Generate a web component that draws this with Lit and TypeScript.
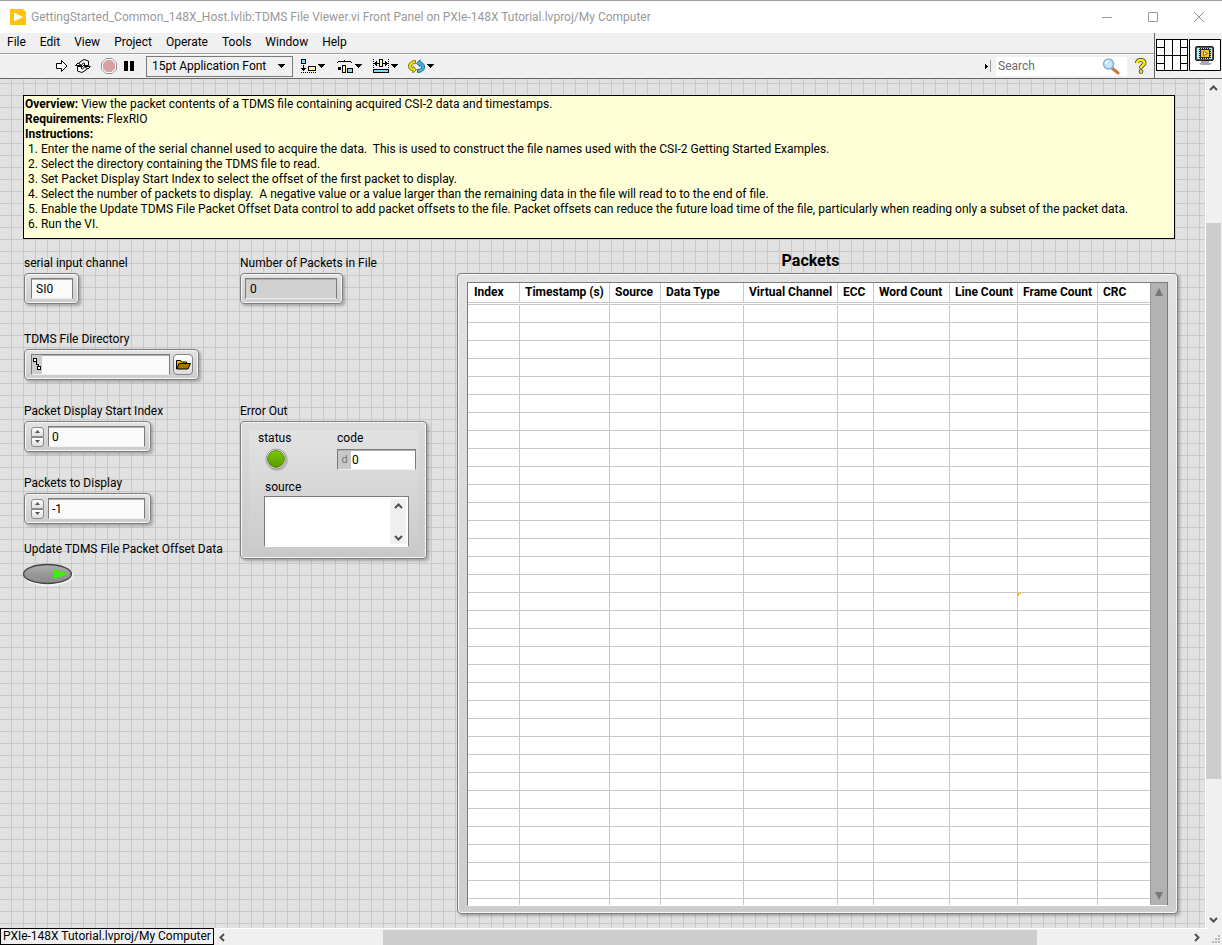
import { LitElement, html, css, svg } from "lit";
import { customElement } from "lit/decorators.js";

const menus = ["File", "Edit", "View", "Project", "Operate", "Tools", "Window", "Help"];

const steps = [
  "1. Enter the name of the serial channel used to acquire the data.  This is used to construct the file names used with the CSI-2 Getting Started Examples.",
  "2. Select the directory containing the TDMS file to read.",
  "3. Set Packet Display Start Index to select the offset of the first packet to display.",
  "4. Select the number of packets to display.  A negative value or a value larger than the remaining data in the file will read to to the end of file.",
  "5. Enable the Update TDMS File Packet Offset Data control to add packet offsets to the file. Packet offsets can reduce the future load time of the file, particularly when reading only a subset of the packet data.",
  "6. Run the VI.",
];

const columns = ["Index", "Timestamp (s)", "Source", "Data Type", "Virtual Channel", "ECC", "Word Count", "Line Count", "Frame Count", "CRC"];

const rowCount = 34;
const flagged = { row: 16, col: 8 };

const caret = html`<svg class="caret" width="7" height="4" viewBox="0 0 7 4" shape-rendering="crispEdges"><path d="M0 0h7v1H6v1H5v1H4v1H3V3H2V2H1V1H0z"/></svg>`;

const chevron = (d: string, w: number, h: number) =>
  html`<svg width=${w} height=${h} viewBox="0 0 ${w} ${h}" fill="none" stroke="#505050" stroke-width="2">${svg`<path d=${d}/>`}</svg>`;
const up = () => chevron("M1 5 4.500 1.500 8 5", 9, 6);
const down = () => chevron("M1 1 4.500 4.500 8 1", 9, 6);
const left = () => chevron("M5 1 1.500 4.500 5 8", 6, 9);
const right = () => chevron("M1 1 4.500 4.500 1 8", 6, 9);

@customElement("app-root")
export class AppRoot extends LitElement {
  static styles = css`
    :host {
      display: flex;
      flex-direction: column;
      min-height: 100vh;
      box-sizing: border-box;
      border-top: 1px solid #a0a0a0;
      background: #f0f0f0;
      color: #000;
      font: 12px/16px Roboto, "Open Sans", sans-serif;
    }
    *, *::before, *::after { box-sizing: border-box; }
    button, input, textarea, select { font: inherit; color: inherit; margin: 0; padding: 0; border: 0; border-radius: 0; outline: 0; background: none; appearance: none; }
    button { display: flex; align-items: center; justify-content: center; }
    svg { display: block; flex: none; }

    .titlebar { display: flex; align-items: center; height: 32px; background: #fff; padding-left: 10px; color: #999; }
    .titlebar h1 { flex: 1; margin: 0 0 0 5px; font: inherit; white-space: nowrap; }
    .titlebar button { width: 46px; height: 32px; }

    .head { display: flex; height: 46px; border-bottom: 1px solid #646464; }
    .bars { flex: 1; display: flex; flex-direction: column; min-width: 0; }
    .menubar { display: flex; height: 21px; align-items: center; border-bottom: 1px solid #a0a0a0; padding: 0 0 2px 7px; gap: 14px; }
    .menubar a { color: #000; text-decoration: none; }
    .toolbar { display: flex; flex: 1; align-items: center; border-top: 1px solid #fff; padding: 0 0 1px 55px; }
    .run { width: 14px; }
    .again { width: 16px; margin-left: 6px; }
    .abort { width: 16px; margin-left: 10px; }
    .pause { width: 10px; margin-left: 7px; }
    .fontpick { display: grid; align-items: center; width: 147px; height: 21px; margin: 0 8px 0 12px; border: 1px solid #7a7a7a; }
    .fontpick select, .fontpick .caret { grid-area: 1 / 1; }
    .fontpick select { padding-left: 5px; height: 19px; width: 145px; }
    .fontpick .caret { justify-self: end; margin-right: 7px; }
    .tool { gap: 2px; width: 24px; margin-right: 12px; }
    .spring { flex: 1; }
    .search { display: flex; align-items: center; margin-left: 4px; width: 131px; height: 19px; background: #fff; }
    .search input { flex: 1; width: 90px; padding-left: 2px; }
    .search input::placeholder { color: #6d6d6d; opacity: 1; }
    .search button { margin-right: 7px; }
    .help { margin: 0 7px 0 8px; }
    .corner { display: flex; align-items: flex-start; gap: 1px; padding: 6px 1px 0 1px; border-left: 1px solid #646464; }

    .main { flex: 1; display: grid; grid-template-columns: 1fr 17px; grid-template-rows: 1fr 17px; }
    .canvas {
      padding: 16px 27px 14px 23px;
      background:
        linear-gradient(90deg, transparent 11px, #c8c8c8 11px) 0 0 / 12px 12px,
        linear-gradient(180deg, transparent 11px, #c8c8c8 11px) 0 5px / 12px 12px,
        #e1e1e1;
    }
    .notes { margin-right: 3px; min-height: 144px; padding: 1px; border: 1px solid #000; background: #ffffd7; line-height: 15px; white-space: pre-wrap; }
    .notes p, .notes ol { margin: 0; padding: 0; list-style: none; }
    .notes ol { padding-left: 3px; }
    .work { display: grid; grid-template-columns: 216px 217px 1fr; grid-template-rows: 76px 72px 72px 66px 1fr; padding: 16px 0 0 1px; }
    .group { display: flex; flex-direction: column; align-items: flex-start; gap: 2px; }
    .group > label, .group > .caption { white-space: nowrap; }
    .first { grid-area: 1 / 1; } .second { grid-area: 2 / 1; } .third { grid-area: 3 / 1; } .fourth { grid-area: 4 / 1; } .fifth { grid-area: 5 / 1; }
    .count { grid-area: 1 / 2; }
    .error { grid-area: 3 / 2 / 6 / 3; }
    .frame {
      display: flex; align-items: center; height: 31px; padding: 0 5px 0 6px;
      border: 1px solid #7d7d7d; border-radius: 4px;
      background: linear-gradient(#e2e2e2, #cdcdcd);
      box-shadow: inset 0 0 0 1px #f6f6f6, 2px 2px 3px #0004;
    }
    .field { height: 21px; padding: 0 4px; border: 1px solid #7b7b7b; border-bottom-color: #eee; background: #fafafa; box-shadow: inset 0 1px #b0b0b0; }
    .frame .short { width: 42px; }
    .frame .wide { width: 92px; background: #d0d0d0; margin-left: -2px; }
    .path { display: flex; align-items: center; width: 139px; padding: 0; }
    .path .grip { display: flex; align-items: center; justify-content: center; align-self: stretch; width: 10px; background: #ccc; }
    .path input { flex: 1; min-width: 0; height: 19px; padding: 0 3px; }
    .browse { width: 20px; height: 21px; margin-left: 3px; border: 1px solid #858585; border-radius: 4px; background: linear-gradient(#fff, #dcdcdc); }
    .spin { display: flex; flex-direction: column; width: 13px; margin-right: 4px; }
    .spin button { height: 10px; border: 1px solid #8b8b8b; border-radius: 3px 3px 0 0; background: linear-gradient(#fff, #dedede); }
    .spin button + button { border-radius: 0 0 3px 3px; }
    .frame .number { width: 97px; padding-left: 3px; }
    .toggle { margin: 4px 0 0 -1px; }

    .cluster {
      display: grid; grid-template-columns: 79px 1fr; align-content: start; width: 187px; height: 138px; padding: 8px 10px 10px 17px;
      background: linear-gradient(#e2e2e2, #cbcbcb) 8px 8px / 169px 120px no-repeat, linear-gradient(#dcdcdc, #c8c8c8);
    }
    .cluster .led { margin: 2px 0 0 7px; }
    .code { display: flex; align-items: center; height: 21px; width: 79px; padding: 0; background: #fff; margin-top: 1px; }
    .code i { font-style: normal; font-size: 11px; color: #777; background: #c8c8c8; width: 13px; text-align: center; height: 18px; line-height: 18px; }
    .code input { width: 60px; padding-left: 1px; }
    .source { display: flex; flex-direction: column; grid-column: 1 / 3; padding: 7px 0 0 7px; }
    .log { display: flex; width: 145px; height: 51px; margin: 1px 0 0 -1px; border: 1px solid #7b7b7b; border-bottom-color: #fff; background: #fff; }
    .log textarea { flex: 1; min-width: 0; resize: none; overflow: hidden; }
    .log .rail { display: flex; flex-direction: column; justify-content: space-between; align-items: center; width: 16px; margin: 2px; padding: 4px 0 3px; background: #f0f0f0; }

    .packets { grid-area: 1 / 3 / 6 / 4; }
    .packets h2 { margin: -5px 14px 0 0; font-size: 16px; line-height: 22px; text-align: center; font-weight: 700; }
    .sheet { margin-top: 1px; height: 641px; padding: 8px 9px 7px 9px; }
    .well { display: flex; flex: 1; min-width: 0; align-self: stretch; overflow: hidden; border: 1px solid #7b7b7b; border-bottom-color: #fff; background: #fff; }
    table { flex: 1; width: 100%; table-layout: fixed; border-collapse: separate; border-spacing: 0; }
    th { height: 20px; padding: 0 0 2px 5px; border-right: 1px solid #c8c8c8; border-bottom: 1px solid #c8c8c8; text-align: left; white-space: nowrap; font-weight: 700; line-height: 16px; }
    th:first-child { padding-left: 6px; }
    td { height: 18px; padding: 0; border-right: 1px solid #c8c8c8; border-bottom: 1px solid #c8c8c8; }
    th:last-child, td:last-child { border-right: 0; }
    .gap td { height: 2px; border-right-color: #fff; }
    tr.cut td { height: 7px; border-bottom: 0; }
    td.flag { background: linear-gradient(#ffb900, #ffb900) 0 0 / 3px 1px no-repeat, linear-gradient(#ffb900, #ffb900) 0 0 / 1px 3px no-repeat; }
    .c0 { width: 52px; } .c1 { width: 90px; } .c2 { width: 51px; } .c3 { width: 83px; } .c4 { width: 94px; }
    .c5 { width: 36px; } .c6 { width: 76px; } .c7 { width: 68px; } .c8 { width: 80px; }
    .vbar { display: flex; flex-direction: column; justify-content: space-between; align-items: center; width: 17px; padding: 5px 0 5px; border-left: 1px solid #999; background: #b2b2b2; }

    .right { display: flex; flex-direction: column; align-items: center; border-left: 1px solid #fff; padding: 6px 1px 5px 0; background: #f0f0f0; }
    .right .lead { flex: 132; } .right .thumb { flex: 553; width: 15px; background: #cdcdcd; } .right .tail { flex: 138; }
    .foot { grid-column: 1 / 3; display: flex; align-items: center; background: #f0f0f0; }
    .target { height: 17px; padding: 0 2px; border: 1px solid #000; line-height: 15px; white-space: nowrap; background: #f0f0f0; }
    .rail-x { flex: 1; display: flex; align-items: center; align-self: stretch; border-top: 1px solid #fff; padding: 0 8px 0 5px; }
    .rail-x .lead { flex: 158; } .rail-x .thumb { flex: 652; height: 15px; background: #cdcdcd; } .rail-x .tail { flex: 157; }
    .grip-corner { align-self: flex-end; margin: 0 2px 2px 4px; }
  `;

  private numberField(id: string, value: string) {
    return html`<div class="frame">
      <div class="spin">
        <button aria-label="Increment"><svg width="5" height="3" viewBox="0 0 5 3"><path d="M2.500 0 5 3H0z" fill="#555"/></svg></button>
        <button aria-label="Decrement"><svg width="5" height="3" viewBox="0 0 5 3"><path d="M2.500 3 5 0H0z" fill="#555"/></svg></button>
      </div>
      <input class="field number" id=${id} .value=${value}>
    </div>`;
  }

  render() {
    return html`
      <header class="titlebar">
        <svg width="16" height="16" viewBox="0 0 16 16"><path d="M0 0h13l3 3v13H0z" fill="#ffc20e"/><path d="M4 3.500 13 8l-9 4.500z" fill="#fff"/></svg>
        <h1>GettingStarted_Common_148X_Host.lvlib:TDMS File Viewer.vi Front Panel on PXIe-148X Tutorial.lvproj/My Computer</h1>
        <button aria-label="Minimize"><svg width="10" height="10" viewBox="0 0 10 10"><path d="M0 5.500h10" stroke="#999"/></svg></button>
        <button aria-label="Maximize"><svg width="10" height="10" viewBox="0 0 10 10"><path d="M.5.5h9v9h-9z" fill="none" stroke="#999"/></svg></button>
        <button aria-label="Close"><svg width="10" height="10" viewBox="0 0 10 10"><path d="m0 0 10 10M10 0 0 10" stroke="#999"/></svg></button>
      </header>

      <div class="head">
        <div class="bars">
          <nav class="menubar">${menus.map((m) => html`<a href="#">${m}</a>`)}</nav>
          <div class="toolbar">
            <button class="run" aria-label="Run"><svg width="12" height="14" viewBox="0 0 12 14"><path d="M.5 4.500h5v-3L11 7l-5.500 5.500v-3h-5z" fill="#fff" stroke="#000"/></svg></button>
            <button class="again" aria-label="Run Continuously"><svg width="16" height="14" viewBox="0 0 16 14" fill="#fff" stroke="#000"><path d="M3.500 5.500 5 3l4-2.500L13.500 2v4.500H8.500L10 5 8.500 3.800 6 6.500z"/><path d="M12.500 8.500 11 11l-4 2.500L2.500 12V7.500h5L6 9l1.500 1.200L10 7.500z"/><path d="M.5 6.500 3 4l3.500 2.500zM15.500 7.500 13 10 9.500 7.500z"/></svg></button>
            <button class="abort" aria-label="Abort Execution"><svg width="16" height="16" viewBox="0 0 16 16"><path d="M5 .5h6L15.500 5v6L11 15.500H5L.5 11V5z" fill="#fff" stroke="#909090"/><path d="M5.500 2h5L14 5.500v5L10.500 14h-5L2 10.500v-5z" fill="#dba0a0"/></svg></button>
            <button class="pause" aria-label="Pause"><svg width="10" height="10" viewBox="0 0 10 10"><path d="M0 0h4v10H0zM6 0h4v10H6z"/></svg></button>
            <div class="fontpick">
              <select aria-label="Text Settings"><option>15pt Application Font</option></select>
              ${caret}
            </div>
            <button class="tool" aria-label="Align Objects"><svg width="15" height="14" viewBox="0 0 15 14" shape-rendering="crispEdges"><path d="M.5.5h4v4h-4z" fill="#6fe0f5" stroke="#000"/><path d="M2 6h1v4H2zM0 9h5v1H4v1H3v1H2v-1H1v-1H0zM0 13h1v1H0zM2 13h1v1H2zM4 13h1v1H4zM6 13h1v1H6zM8 13h1v1H8zM10 13h1v1h-1zM12 13h1v1h-1zM14 13h1v1h-1z"/><path d="M7.500 7.500h7v4h-7z" fill="#fff7a0" stroke="#000"/></svg>${caret}</button>
            <button class="tool" aria-label="Distribute Objects"><svg width="16" height="13" viewBox="0 0 16 13" shape-rendering="crispEdges"><path d="M0 2h1V1h6V0h1v1h6v1h1v1h-1V2H1v1H0zM1 7h3v3H1z"/><path d="M5.500 5.500h3v7h-3z" fill="#fff7a0" stroke="#000"/><path d="M10.500 8.500h5v4h-5z" fill="#6fe0f5" stroke="#000"/></svg>${caret}</button>
            <button class="tool" aria-label="Resize Objects"><svg width="16" height="14" viewBox="0 0 16 14" shape-rendering="crispEdges"><path d="M0 0h1v1H0zM0 2h1v1H0zM0 4h1v1H0zM0 6h1v1H0zM0 8h1v1H0zM15 0h1v1h-1zM15 2h1v1h-1zM15 4h1v1h-1zM15 6h1v1h-1zM15 8h1v1h-1zM1 4h1V3h1V2h1v2h2v1H4v2H3V6H2V5H1zM15 4h-1V3h-1V2h-1v2h-2v1h2v2h1V6h1V5h1z"/><path d="M6.500.5h3v7h-3z" fill="#fff7a0" stroke="#000"/><path d="M.5 10.500h15v3H.5z" fill="#6fe0f5" stroke="#000"/></svg>${caret}</button>
            <button class="tool" aria-label="Reorder"><svg width="17" height="15" viewBox="0 0 17 15"><path d="M7.500 1.500C3 1.500.5 4 .5 7s2 4.500 4.500 5v2L8.500 10.500 5 7.500v1.600C4 8.500 3.500 8 3.500 7c0-1.500 1.500-2.500 4-2.500z" fill="#e8dc18" stroke="#8a7f00"/><path d="M9.500 13.500c4.500 0 7-2.500 7-5.500s-2-4.500-4.500-5V.8L8.500 4.500l3.500 3V5.900c1 .6 1.500 1.100 1.500 2.100 0 1.500-1.500 2.500-4 2.500z" fill="#49b4dc" stroke="#1d6f92"/></svg>${caret}</button>
            <span class="spring"></span>
            <svg width="7" height="12" viewBox="0 0 7 12" shape-rendering="crispEdges"><path d="M0 4h1v1h1v1h1v1H2v1H1v1H0z"/><path d="M5 0h1v12H5z" fill="#999"/></svg>
            <div class="search">
              <input aria-label="Search" placeholder="Search">
              <button aria-label="Find"><svg width="18" height="17" viewBox="0 0 18 17"><path d="m10 10 6 5" stroke="#c77a45" stroke-width="3" stroke-linecap="round"/><circle cx="6.500" cy="6" r="5" fill="#c4e6fb" stroke="#86aedb" stroke-width="1.500"/><path d="M3.500 6a3 3 0 0 1 3-3" fill="none" stroke="#fff" stroke-width="1.500"/></svg></button>
            </div>
            <button class="help" aria-label="Context Help"><svg width="12" height="16" viewBox="0 0 12 16" fill="none"><path d="M2 5C2 1 9.500 1 9.500 5 9.500 7.500 6 7 6 10.500" stroke="#333" stroke-width="4"/><circle cx="6" cy="13.500" r="2.300" fill="#333"/><path d="M2 5C2 1 9.500 1 9.500 5 9.500 7.500 6 7 6 10" stroke="#ffee00" stroke-width="2.600"/><circle cx="6" cy="13.500" r="1.500" fill="#ffee00"/></svg></button>
          </div>
        </div>
        <div class="corner">
          <svg width="32" height="32" viewBox="0 0 32 32" fill="#fff" stroke="#000" shape-rendering="crispEdges"><path d="M.5.5h31v31H.5zM8.500 0v32M16.500 0v32M24.500 0v32M0 16.500h32M0 8.500h8M0 24.500h8M24 8.500h8M24 24.500h8"/></svg>
          <svg width="32" height="32" viewBox="0 0 32 32"><path d="M.5.5h31v31H.5z" fill="#fff" stroke="#000"/><path d="M12 22h8v2h3l-2 2H12l-2-2h2z" fill="#aaa"/><rect x="6.500" y="7.500" width="18" height="14" rx="1.500" fill="#555" stroke="#222"/><path d="M8 9h15v11H8z" fill="#9ff3f8"/><path d="M11 9.500h10M11 19.500h10" stroke="#111" stroke-dasharray="1 1"/><path d="M10.500 10v9M21.500 10v9" stroke="#111" stroke-dasharray="1 1"/><path d="M11.500 10.500h9v8h-9z" fill="#f8c414" stroke="#222"/><path d="m14.500 12.500 4 2-4 2z" fill="#fff" stroke="#6d5300" stroke-width=".8"/></svg>
        </div>
      </div>

      <div class="main">
        <main class="canvas">
          <section class="notes"><p><b>Overview:</b> View the packet contents of a TDMS file containing acquired CSI-2 data and timestamps.</p><p><b>Requirements:</b> FlexRIO</p><p><b>Instructions:</b></p><ol>${steps.map((s) => html`<li>${s}</li>`)}</ol></section>

          <div class="work">
            <div class="group first">
              <label for="channel">serial input channel</label>
              <div class="frame"><input class="field short" id="channel" .value=${"SI0"}></div>
            </div>
            <div class="group second">
              <label for="dir">TDMS File Directory</label>
              <div class="frame">
                <div class="field path">
                  <span class="grip"><svg width="8" height="13" viewBox="0 0 8 13" fill="#fff" stroke="#000" shape-rendering="crispEdges"><path d="M.5.500h3v3h-3zM4.500 8.500h3v3h-3zM3.500 4v2.500h1.500V8"/></svg></span>
                  <input id="dir">
                </div>
                <button class="browse" aria-label="Browse"><svg width="15" height="11" viewBox="0 0 15 11"><path d="M.5 10V1.500h4l1 1.500h5V5" fill="#ffb000" stroke="#000"/><path d="M3 4.500h11.500L12 10H.8z" fill="#a87100" stroke="#000"/></svg></button>
              </div>
            </div>
            <div class="group third"><label for="start">Packet Display Start Index</label>${this.numberField("start", "0")}</div>
            <div class="group fourth"><label for="amount">Packets to Display</label>${this.numberField("amount", "-1")}</div>
            <div class="group fifth">
              <span class="caption" id="update">Update TDMS File Packet Offset Data</span>
              <button class="toggle" role="switch" aria-checked="true" aria-labelledby="update">
                <svg width="52" height="24" viewBox="0 0 52 24">
                  <defs>
                    <linearGradient id="pill" x1="0" y1="0" x2="0" y2="1"><stop offset="0" stop-color="#b0b0b0"/><stop offset=".5" stop-color="#989898"/><stop offset="1" stop-color="#8a8a8a"/></linearGradient>
                  </defs>
                  <ellipse cx="25.500" cy="12" rx="25" ry="11" fill="#f4f4f4"/>
                  <ellipse cx="24.500" cy="11" rx="24" ry="9.500" fill="url(#pill)" stroke="#444" stroke-width="1.300"/>
                  <path d="M31 6 45 11 31 16z" fill="#3df00c"/>
                </svg>
              </button>
            </div>

            <div class="group count">
              <label for="total">Number of Packets in File</label>
              <div class="frame"><input class="field wide" id="total" readonly .value=${"0"}></div>
            </div>

            <div class="group error">
              <span class="caption">Error Out</span>
              <div class="frame cluster">
                <span>status</span><label for="code">code</label>
                <svg class="led" width="24" height="24" viewBox="0 0 24 24" role="img" aria-label="OK">
                  <defs><linearGradient id="lamp" x1="0" y1="0" x2="0" y2="1"><stop offset="0" stop-color="#78cc00"/><stop offset="1" stop-color="#5c9800"/></linearGradient></defs>
                  <circle cx="12" cy="12" r="11" fill="#0002"/><circle cx="11" cy="11" r="10" fill="#fff" stroke="#888" stroke-width=".8"/><circle cx="11" cy="11" r="8.500" fill="url(#lamp)" stroke="#446f00" stroke-width=".8"/>
                </svg>
                <div class="field code"><i>d</i><input id="code" readonly .value=${"0"}></div>
                <div class="source">
                  <label for="source">source</label>
                  <div class="log"><textarea id="source" readonly></textarea><span class="rail">${up()}${down()}</span></div>
                </div>
              </div>
            </div>

            <section class="packets">
              <h2>Packets</h2>
              <div class="frame sheet">
                <div class="well">
                  <table>
                    <colgroup>${columns.map((_, i) => html`<col class="c${i}">`)}</colgroup>
                    <thead><tr>${columns.map((c) => html`<th scope="col">${c}</th>`)}</tr></thead>
                    <tbody>
                      <tr class="gap">${columns.map(() => html`<td></td>`)}</tr>
                      ${Array.from({ length: rowCount }, (_, r) => html`<tr class=${r === rowCount - 1 ? "cut" : ""}>${columns.map((_c, c) => html`<td class=${r === flagged.row && c === flagged.col ? "flag" : ""}></td>`)}</tr>`)}
                    </tbody>
                  </table>
                  <div class="vbar">
                    <svg width="8" height="8" viewBox="0 0 8 8"><path d="M4 0 8 8H0z" fill="#777"/></svg>
                    <svg width="8" height="8" viewBox="0 0 8 8"><path d="M4 8 8 0H0z" fill="#777"/></svg>
                  </div>
                </div>
              </div>
            </section>
          </div>
        </main>

        <div class="right">${up()}<span class="lead"></span><span class="thumb"></span><span class="tail"></span>${down()}</div>
        <footer class="foot">
          <span class="target">PXIe-148X Tutorial.lvproj/My Computer</span>
          <div class="rail-x">${left()}<span class="lead"></span><span class="thumb"></span><span class="tail"></span>${right()}</div>
          <svg class="grip-corner" width="8" height="8" viewBox="0 0 8 8" fill="#b8b8b8" shape-rendering="crispEdges"><path d="M6 0h2v2H6zM3 3h2v2H3zM6 3h2v2H6zM0 6h2v2H0zM3 6h2v2H3zM6 6h2v2H6z"/></svg>
        </footer>
      </div>`;
  }
}
